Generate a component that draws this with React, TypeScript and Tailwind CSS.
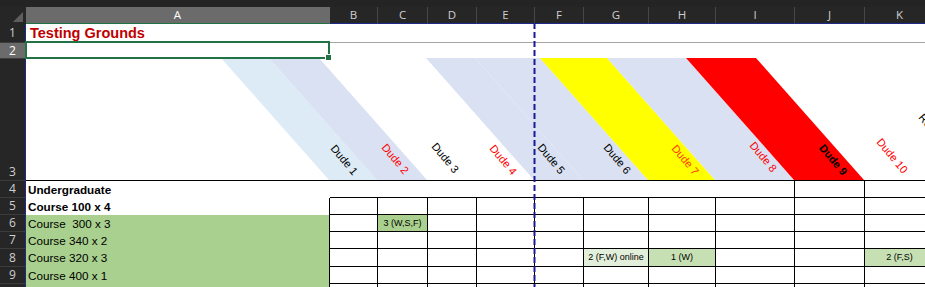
import React from 'react';

const colW = ['w-[304px]', 'w-[48px]', 'w-[50px]', 'w-[49px]', 'w-[58px]', 'w-[49px]', 'w-[65px]', 'w-[67px]', 'w-[79px]', 'w-[70px]', 'w-[70px]'];
const letters = ['A', 'B', 'C', 'D', 'E', 'F', 'G', 'H', 'I', 'J', 'K'];

type CellSpec = { t: string; bg: string };
type RowSpec = { n: number; h: string; a: string; bold?: boolean; green?: boolean; cells?: Record<number, CellSpec> };

const rows: RowSpec[] = [
  { n: 4, h: 'h-[17px]', a: 'Undergraduate', bold: true },
  { n: 5, h: 'h-[17px]', a: 'Course 100 x 4', bold: true },
  { n: 6, h: 'h-[17px]', a: 'Course\u00a0 300 x 3', green: true, cells: { 2: { t: '3 (W,S,F)', bg: 'bg-[#a9d08e]' } } },
  { n: 7, h: 'h-[17px]', a: 'Course 340 x 2', green: true },
  {
    n: 8,
    h: 'h-[18px]',
    a: 'Course 320 x 3',
    green: true,
    cells: {
      6: { t: '2 (F,W) online', bg: 'bg-[#e2efda]' },
      7: { t: '1 (W)', bg: 'bg-[#c6e0b4]' },
      10: { t: '2 (F,S)', bg: 'bg-[#c6e0b4]' },
    },
  },
  { n: 9, h: 'h-[17px]', a: 'Course 400 x 1', green: true },
  { n: 10, h: 'h-[17px]', a: '', green: true },
];

const bands: { x0: number; x1: number; fill: string }[] = [
  { x0: 329, x1: 377, fill: '#ddebf7' },
  { x0: 377, x1: 427, fill: '#d9e1f2' },
  { x0: 534, x1: 583, fill: '#d9e1f2' },
  { x0: 583, x1: 648, fill: '#d9e1f2' },
  { x0: 648, x1: 715, fill: '#ffff00' },
  { x0: 715, x1: 794, fill: '#d9e1f2' },
  { x0: 794, x1: 864, fill: '#ff0000' },
];

const labels: { t: string; pos: string; color: string; bold?: boolean }[] = [
  { t: 'Dude 1', pos: 'left-[344px] top-[160px]', color: 'text-black' },
  { t: 'Dude 2', pos: 'left-[395px] top-[159px]', color: 'text-[#ff0000]' },
  { t: 'Dude 3', pos: 'left-[445px] top-[158px]', color: 'text-black' },
  { t: 'Dude 4', pos: 'left-[503px] top-[160px]', color: 'text-[#ff0000]' },
  { t: 'Dude 5', pos: 'left-[551px] top-[159px]', color: 'text-black' },
  { t: 'Dude 6', pos: 'left-[617px] top-[159px]', color: 'text-black' },
  { t: 'Dude 7', pos: 'left-[685px] top-[160px]', color: 'text-[#ff3c00]' },
  { t: 'Dude 8', pos: 'left-[763px] top-[157px]', color: 'text-[#ff0000]' },
  { t: 'Dude 9', pos: 'left-[833px] top-[160px]', color: 'text-black', bold: true },
  { t: 'Dude 10', pos: 'left-[892px] top-[156px]', color: 'text-[#ff0000]' },
];

function RowHead({ n, h, selected, end }: { n: number | string; h: string; selected?: boolean; end?: boolean }) {
  return (
    <div
      className={`${h} w-[26px] shrink-0 flex justify-center border-r border-r-[#1d2a8a] border-b border-b-[#3c3c3c] text-[12px] leading-none font-['Open_Sans',sans-serif] ${
        end ? 'items-end pb-[2px]' : 'items-center'
      } ${selected ? 'bg-[#6b6b6b] text-white' : 'bg-[#262626] text-[#cfcfcf]'}`}
    >
      {n}
    </div>
  );
}

export default function App() {
  return (
    <div className="relative w-[925px] h-[287px] overflow-hidden bg-white font-['Liberation_Sans',Arial,sans-serif] text-black">
      <div className="h-[7px] bg-[#242424]" />
      <div className="flex h-[17px] bg-[#262626]">
        <div className="relative w-[26px] shrink-0 border-b border-[#262626]">
          <svg className="absolute left-0 top-0" width="26" height="17" viewBox="0 0 26 17">
            <polygon points="23,5 23,15 13,15" fill="#5e5e5e" />
          </svg>
        </div>
        {letters.map((l, i) => (
          <div
            key={l}
            className={`${colW[i]} shrink-0 flex items-center justify-center text-[11.5px] leading-none font-['Open_Sans',sans-serif] border-r ${
              i === 0
                ? 'bg-[#6b6b6b] text-white border-r-[#6b6b6b] border-b border-b-[#217346]'
                : 'text-[#cfcfcf] border-r-[#474747] border-b border-b-[#1d2a8a]'
            }`}
          >
            {l}
          </div>
        ))}
      </div>

      <div className="flex">
        <RowHead n={1} h="h-[19px]" />
        <div className="flex-1 h-[19px] border-b border-[#a6a6a6] flex items-center pl-[4px]">
          <span className="text-[14.5px] font-bold text-[#c00000] leading-none">Testing Grounds</span>
        </div>
      </div>
      <div className="flex">
        <RowHead n={2} h="h-[16px]" selected />
        <div className="flex-1 h-[16px]" />
      </div>
      <div className="flex">
        <RowHead n={3} h="h-[122px]" end />
        <div className="flex-1 h-[122px] border-b border-black" />
      </div>

      {rows.map((r) => (
        <div key={r.n} className="flex">
          <RowHead n={r.n} h={r.h} />
          {colW.map((w, i) => {
            const spec = r.cells?.[i];
            if (i === 0) {
              return (
                <div
                  key={i}
                  className={`${w} ${r.h} shrink-0 flex items-center pl-[2px] whitespace-pre text-[11.7px] leading-none ${
                    r.bold ? 'font-bold text-[11.4px]' : ''
                  } ${r.green ? 'bg-[#a9d08e]' : ''} ${r.n >= 5 ? 'border-r border-black' : ''}`}
                >
                  {r.a}
                </div>
              );
            }
            const rightBorder = r.n >= 5 || i === 8 || i === 9;
            return (
              <div
                key={i}
                className={`${w} ${r.h} shrink-0 flex items-center justify-center text-[9px] leading-none whitespace-nowrap border-b border-black ${
                  rightBorder ? 'border-r' : ''
                } ${spec ? spec.bg : ''}`}
              >
                {spec?.t}
              </div>
            );
          })}
        </div>
      ))}

      <svg className="absolute left-0 top-[58px]" width="925" height="122" viewBox="0 0 925 122">
        {bands.map((b, i) => (
          <polygon key={i} points={`${b.x0 - 108},0 ${b.x1 - 108},0 ${b.x1},122 ${b.x0},122`} fill={b.fill} />
        ))}
      </svg>

      {labels.map((l) => (
        <div
          key={l.t}
          className={`absolute ${l.pos} -translate-x-1/2 -translate-y-1/2 rotate-[50deg] whitespace-nowrap text-[11px] leading-none ${l.color} ${
            l.bold ? 'font-bold' : ''
          }`}
        >
          {l.t}
        </div>
      ))}
      <div className="absolute left-[925px] top-[112px] origin-top-left rotate-[50deg] whitespace-nowrap text-[11px] leading-none text-black">
        Rob 11
      </div>

      <div className="absolute left-[25px] top-[41px] w-[305px] h-[18px] border-2 border-[#217346]" />
      <div className="absolute left-[326px] top-[55px] w-[5px] h-[5px] bg-[#217346] outline outline-1 outline-white" />

      <svg className="absolute left-[533px] top-[23px]" width="3" height="264" viewBox="0 0 3 264">
        <line x1="1.5" y1="0" x2="1.5" y2="264" stroke="#1a1a96" strokeWidth="2" strokeDasharray="6 3" />
      </svg>
    </div>
  );
}
